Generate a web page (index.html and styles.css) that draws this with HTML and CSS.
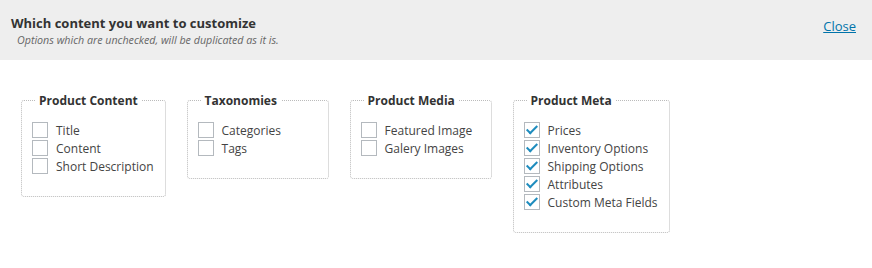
FILE: index.html
```html
<!doctype html>
<html lang="en">
<head>
  <meta charset="utf-8">
  <title>Customize content</title>
  <link rel="stylesheet" href="styles.css">
</head>
<body>
  <div class="header">
    <div class="headText">
      <div class="title">Which content you want to customize</div>
      <div class="subtitle">Options which are unchecked, will be duplicated as it is.</div>
    </div>
    <a href="#" class="close">Close</a>
  </div>
  <div class="groups">
    <fieldset class="group">
      <legend>Product Content</legend>
      <label><input type="checkbox"><span>Title</span></label>
      <label><input type="checkbox"><span>Content</span></label>
      <label><input type="checkbox"><span>Short Description</span></label>
    </fieldset>
    <fieldset class="group">
      <legend>Taxonomies</legend>
      <label><input type="checkbox"><span>Categories</span></label>
      <label><input type="checkbox"><span>Tags</span></label>
    </fieldset>
    <fieldset class="group">
      <legend>Product Media</legend>
      <label><input type="checkbox"><span>Featured Image</span></label>
      <label><input type="checkbox"><span>Galery Images</span></label>
    </fieldset>
    <fieldset class="group">
      <legend>Product Meta</legend>
      <label><input type="checkbox" checked><span>Prices</span></label>
      <label><input type="checkbox" checked><span>Inventory Options</span></label>
      <label><input type="checkbox" checked><span>Shipping Options</span></label>
      <label><input type="checkbox" checked><span>Attributes</span></label>
      <label><input type="checkbox" checked><span>Custom Meta Fields</span></label>
    </fieldset>
  </div>
</body>
</html>
```
FILE: styles.css
```css
body{
    margin:0;
    font-family:"Open Sans", "Noto Sans", sans-serif;
    font-size:12px;
    color:#444;
    background:#fff;
}
.header{
    background:#eee;
    height:60px;
    display:flex;
    justify-content:space-between;
    align-items:flex-start;
    padding:0 16px 0 11px;
}
.title{
    font-weight:bold;
    font-size:13px;
    color:#333;
    margin-top:14px;
    line-height:18px;
}
.subtitle{
    font-style:italic;
    font-size:10.7px;
    color:#666;
    margin-left:6px;
    line-height:16px;
}
.close{
    color:#0073aa;
    font-size:13px;
    margin-top:17px;
}
.groups{
    display:flex;
    align-items:flex-start;
    gap:21px;
    padding:32px 0 0 21px;
}
.group{
    margin:0;
    min-width:119px;
    border:1px dotted #bbb;
    border-radius:3px;
    padding:12px 11px 21px 10px;
}
.group legend{
    font-weight:bold;
    font-size:12px;
    color:#333;
    padding:0 4px;
    margin-left:3px;
}
.group label{
    display:flex;
    align-items:center;
    height:18px;
    color:#444;
}
.group input{
    appearance:none;
    -webkit-appearance:none;
    width:16px;
    height:16px;
    margin:0 8px 0 0;
    border:1px solid #b4b9be;
    background:#fff;
    position:relative;
}
.group input:checked::after{
    content:"";
    position:absolute;
    left:4px;
    top:0px;
    width:4px;
    height:9px;
    border:solid #1e8cbe;
    border-width:0 2.5px 2.5px 0;
    transform:rotate(45deg);
}
```
